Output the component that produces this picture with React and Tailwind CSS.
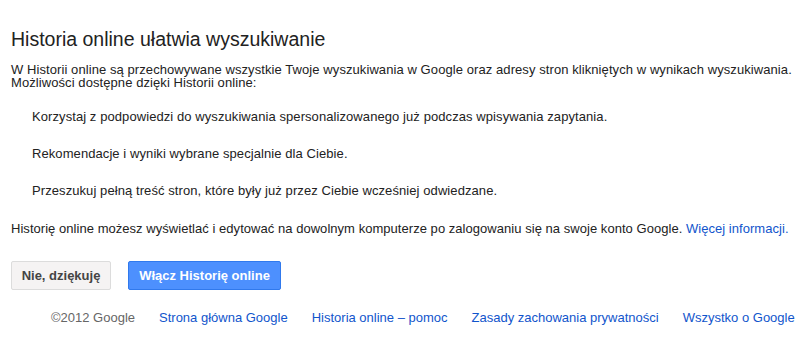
import React from 'react';

const items = [
  'Korzystaj z podpowiedzi do wyszukiwania spersonalizowanego już podczas wpisywania zapytania.',
  'Rekomendacje i wyniki wybrane specjalnie dla Ciebie.',
  'Przeszukuj pełną treść stron, które były już przez Ciebie wcześniej odwiedzane.',
];

const footerLinks = [
  'Strona główna Google',
  'Historia online – pomoc',
  'Zasady zachowania prywatności',
  'Wszystko o Google',
];

export default function App() {
  return (
    <div className="w-[806px] h-[339px] bg-white pl-[11px] pt-[28px] font-['Liberation_Sans',Arial,sans-serif] text-[13px] text-[#222] tracking-[0.08px]">
      <h1 className="text-[19.5px] leading-[23px] font-normal tracking-normal">Historia online ułatwia wyszukiwanie</h1>

      <p className="mt-[12px] leading-[13px]">
        W Historii online są przechowywane wszystkie Twoje wyszukiwania w Google oraz adresy stron klikniętych w wynikach wyszukiwania.
        <br />
        Możliwości dostępne dzięki Historii online:
      </p>

      <ul className="mt-[20px] ml-[21px] flex flex-col gap-[21px]">
        {items.map((t) => (
          <li key={t} className="leading-[16px]">{t}</li>
        ))}
      </ul>

      <p className="mt-[22px] leading-[16px] tracking-[0.04px]">
        Historię online możesz wyświetlać i edytować na dowolnym komputerze po zalogowaniu się na swoje konto Google.{' '}
        <a href="#" className="text-[#1155cc]">Więcej informacji.</a>
      </p>

      <div className="mt-[24px] flex gap-[17px]">
        <button className="h-[29px] w-[100px] rounded-[2px] border border-[#dcdcdc] bg-[#f5f3f3] text-[13px] font-bold text-[#444] tracking-normal">
          Nie, dziękuję
        </button>
        <button className="h-[29px] w-[153px] rounded-[2px] border border-[#3079ed] bg-[#4d90fe] text-[13px] font-bold text-white tracking-normal">
          Włącz Historię online
        </button>
      </div>

      <div className="mt-[20px] ml-[40px] flex gap-[24px] leading-[16px] tracking-normal">
        <span className="text-[#666]">©2012 Google</span>
        {footerLinks.map((l) => (
          <a key={l} href="#" className="text-[#1155cc]">{l}</a>
        ))}
      </div>
    </div>
  );
}
